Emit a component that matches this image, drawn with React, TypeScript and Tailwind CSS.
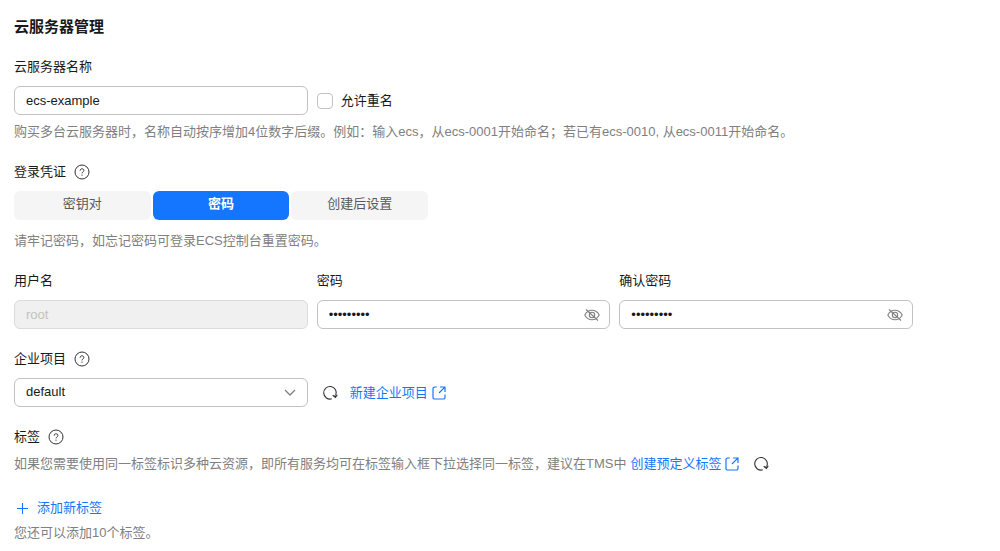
import { useState } from "react";
import type { ReactNode } from "react";

function HelpIcon() {
  return (
    <svg viewBox="0 0 16 16" className="size-4 shrink-0" fill="none" stroke="#333333" aria-hidden="true">
      <circle cx="8" cy="8" r="7" />
      <path d="M6.1 6.7C6.1 5.5 6.900 4.800 8 4.800s1.900.7 1.900 1.700c0 1.300-1.900 1.500-1.900 2.900" />
      <path d="M8 10.600v1.100" />
    </svg>
  );
}

function RefreshIcon() {
  return (
    <svg viewBox="0 0 16 16" className="size-4" fill="none" stroke="#333333" strokeWidth="1.1" aria-hidden="true">
      <path d="M9.800 13.800A6.300 6.300 0 1 1 13.800 10.200" />
      <path d="M10.700 10.200L13.400 12.400L15.300 9.800" />
      <path d="M11.600 10.600h3.200l-1.400 1.800z" fill="#333333" stroke="none" />
    </svg>
  );
}

function ExternalIcon() {
  return (
    <svg viewBox="0 0 14 14" className="size-3.5 shrink-0" fill="none" stroke="currentColor" strokeWidth="1.2" aria-hidden="true">
      <path d="M4.800 1H2.600A1.600 1.600 0 0 0 1 2.600v8.800A1.600 1.600 0 0 0 2.600 13h8.800a1.600 1.600 0 0 0 1.600-1.600V8.500" />
      <path d="M8 1h5v5M12.800 1.200L7 7" />
    </svg>
  );
}

function EyeOffIcon() {
  return (
    <svg viewBox="0 0 16 12" className="h-3 w-4" fill="none" stroke="#808080" strokeWidth="1.1" aria-hidden="true">
      <path d="M.8 6C2.4 2.900 5 1.200 8 1.200S13.600 2.900 15.200 6C13.600 9.100 11 10.800 8 10.800S2.400 9.100.8 6z" />
      <circle cx="8" cy="6" r="2.700" />
      <path d="M2 .5l12 11" />
    </svg>
  );
}

function HelpButton({ label }: { label: string }) {
  return (
    <button type="button" aria-label={label} className="flex cursor-pointer">
      <HelpIcon />
    </button>
  );
}

function RefreshButton({ label }: { label: string }) {
  return (
    <button type="button" aria-label={label} className="flex cursor-pointer">
      <RefreshIcon />
    </button>
  );
}

function Hint({ children }: { children: ReactNode }) {
  return <p className="text-[#808080]">{children}</p>;
}

function PasswordField({ id, label }: { id: string; label: string }) {
  const [visible, setVisible] = useState(false);
  return (
    <div className="flex flex-col gap-[9px]">
      <label htmlFor={id}>{label}</label>
      <div className="flex h-[29px] items-center rounded-md border border-[#c2c2c2] pr-[9px] pl-[11px]">
        <input
          id={id}
          type={visible ? "text" : "password"}
          defaultValue="Example#1"
          className="min-w-0 flex-1 outline-none"
        />
        <button
          type="button"
          aria-label="显示密码"
          onClick={() => setVisible(!visible)}
          className="flex cursor-pointer"
        >
          <EyeOffIcon />
        </button>
      </div>
    </div>
  );
}

const credentialModes = ["密钥对", "密码", "创建后设置"];

export default function App() {
  const [mode, setMode] = useState("密码");

  return (
    <main className="min-h-screen bg-white px-3.5 pt-[17px] pb-2 font-['Liberation_Sans','Noto_Sans_CJK_SC',sans-serif] text-[13px] leading-5 text-[#191919]">
      <h1 className="text-[15px] leading-5 font-bold">云服务器管理</h1>

      <section className="mt-5">
        <label htmlFor="name" className="block">
          云服务器名称
        </label>
        <div className="mt-[9px] grid max-w-[899px] grid-cols-3 items-center gap-[9px]">
          <input
            id="name"
            type="text"
            defaultValue="ecs-example"
            className="h-[29px] w-full rounded-md border border-[#c2c2c2] px-[11px] outline-none"
          />
          <label className="flex items-center gap-2">
            <input
              type="checkbox"
              className="size-4 appearance-none rounded border border-[#c2c2c2] checked:border-[#1476ff] checked:bg-[#1476ff]"
            />
            允许重名
          </label>
        </div>
        <div className="mt-[7px]">
          <Hint>
            购买多台云服务器时，名称自动按序增加4位数字后缀。例如：输入ecs，从ecs-0001开始命名；若已有ecs-0010, 从ecs-0011开始命名。
          </Hint>
        </div>
      </section>

      <section className="mt-5">
        <div className="flex items-center gap-2">
          <h2>登录凭证</h2>
          <HelpButton label="登录凭证说明" />
        </div>
        <div className="mt-[9px] grid max-w-[414px] grid-cols-3 gap-0.5">
          {credentialModes.map((name) => (
            <button
              key={name}
              type="button"
              aria-pressed={name === mode}
              onClick={() => setMode(name)}
              className={
                name === mode
                  ? "h-[29px] cursor-pointer rounded-md bg-[#1476ff] pb-1 font-bold text-white"
                  : "h-[29px] cursor-pointer rounded-md bg-[#f5f5f5] pb-1 text-[#595959]"
              }
            >
              {name}
            </button>
          ))}
        </div>
        <div className="mt-[11px]">
          <Hint>请牢记密码，如忘记密码可登录ECS控制台重置密码。</Hint>
        </div>
        <div className="mt-5 grid max-w-[899px] grid-cols-3 gap-[9px]">
          <div className="flex flex-col gap-[9px]">
            <label htmlFor="user">用户名</label>
            <input
              id="user"
              type="text"
              value="root"
              disabled
              className="h-[29px] w-full rounded-md border border-[#dbdbdb] bg-[#f0f0f0] px-[11px] text-[#c2c2c2]"
            />
          </div>
          <PasswordField id="password" label="密码" />
          <PasswordField id="confirm" label="确认密码" />
        </div>
      </section>

      <section className="mt-5">
        <div className="flex items-center gap-2">
          <label htmlFor="project">企业项目</label>
          <HelpButton label="企业项目说明" />
        </div>
        <div className="mt-[9px] grid max-w-[899px] grid-cols-3 items-center gap-[9px]">
          <div className="grid items-center">
            <select
              id="project"
              className="col-start-1 row-start-1 h-[29px] w-full appearance-none rounded-md border border-[#c2c2c2] bg-white px-[11px] pb-0.5 outline-none"
            >
              <option>default</option>
            </select>
            <svg
              viewBox="0 0 12 8"
              className="pointer-events-none col-start-1 row-start-1 mr-3 h-2 w-3 justify-self-end"
              fill="none"
              stroke="#808080"
              strokeWidth="1.3"
              aria-hidden="true"
            >
              <path d="M1 1l5 5 5-5" />
            </svg>
          </div>
          <div className="flex items-center gap-3 pl-[5px]">
            <RefreshButton label="刷新企业项目" />
            <a href="#project" className="flex items-center gap-1 text-[#1476ff]">
              新建企业项目
              <ExternalIcon />
            </a>
          </div>
        </div>
      </section>

      <section className="mt-5">
        <div className="flex items-center gap-2">
          <h2>标签</h2>
          <HelpButton label="标签说明" />
        </div>
        <div className="mt-[7px] flex flex-wrap items-center gap-x-1">
          <Hint>如果您需要使用同一标签标识多种云资源，即所有服务均可在标签输入框下拉选择同一标签，建议在TMS中</Hint>
          <a href="#tags" className="mr-2.5 flex items-center gap-1 text-[#1476ff]">
            创建预定义标签
            <ExternalIcon />
          </a>
          <RefreshButton label="刷新标签" />
        </div>
        <button type="button" className="mt-6 flex cursor-pointer items-center gap-2 pl-0.5 text-[#1476ff]">
          <svg viewBox="0 0 13 13" className="size-[13px]" fill="none" stroke="currentColor" aria-hidden="true">
            <path d="M6.5 1v11M1 6.5h11" strokeWidth="1.1" />
          </svg>
          添加新标签
        </button>
        <div className="mt-[5px]">
          <Hint>您还可以添加10个标签。</Hint>
        </div>
      </section>
    </main>
  );
}
